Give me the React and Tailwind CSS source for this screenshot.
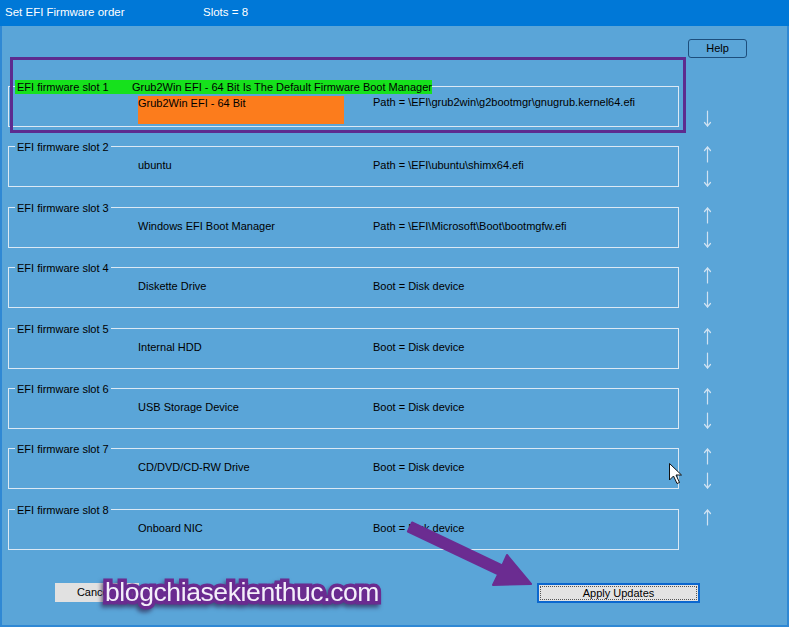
import React from 'react';

const slots = [
  { n: 1, name: 'Grub2Win EFI - 64 Bit', info: 'Path = \\EFI\\grub2win\\g2bootmgr\\gnugrub.kernel64.efi', up: false, down: true, current: true },
  { n: 2, name: 'ubuntu', info: 'Path = \\EFI\\ubuntu\\shimx64.efi', up: true, down: true },
  { n: 3, name: 'Windows EFI Boot Manager', info: 'Path = \\EFI\\Microsoft\\Boot\\bootmgfw.efi', up: true, down: true },
  { n: 4, name: 'Diskette Drive', info: 'Boot = Disk device', up: true, down: true },
  { n: 5, name: 'Internal HDD', info: 'Boot = Disk device', up: true, down: true },
  { n: 6, name: 'USB Storage Device', info: 'Boot = Disk device', up: true, down: true },
  { n: 7, name: 'CD/DVD/CD-RW Drive', info: 'Boot = Disk device', up: true, down: true },
  { n: 8, name: 'Onboard NIC', info: 'Boot = Disk device', up: true, down: false },
];

function Arrow({ dir }) {
  return (
    <svg width="9" height="17" viewBox="0 0 9 17" className="block">
      <g stroke="#cfe2f2" strokeWidth="1.2" fill="none" strokeLinecap="round">
        <line x1="4.5" y1="1" x2="4.5" y2="16" />
        {dir === 'up' ? (
          <polyline points="1.5,4.5 4.5,1 7.5,4.5" />
        ) : (
          <polyline points="1.5,12.5 4.5,16 7.5,12.5" />
        )}
      </g>
    </svg>
  );
}

function Slot({ slot }) {
  return (
    <div className="flex items-start">
      <div className="relative ml-[6px] w-[671px] h-[41px] border border-[#dbe9f5]">
        {slot.current ? (
          <>
            <div className="absolute left-[6px] top-[-7px] w-[417px] h-[14px] bg-[#16e11c] flex whitespace-nowrap leading-[14px]">
              <span className="pl-[2px] w-[118px]">EFI firmware slot 1</span>
              <span>Grub2Win EFI - 64 Bit Is The Default Firmware Boot Manager</span>
            </div>
            <div className="flex pl-[129px] pt-[9px] leading-[14px] whitespace-nowrap">
              <div className="w-[235px]">
                <div className="w-[206px] h-[28px] bg-[#fc7c1c]">{slot.name}</div>
              </div>
              <span className="-mt-[1px]">{slot.info}</span>
            </div>
          </>
        ) : (
          <>
            <span className="absolute left-[6px] top-[-6px] px-[2px] leading-[12px] bg-[#5aa5d8] whitespace-nowrap">
              EFI firmware slot {slot.n}
            </span>
            <div className="flex pl-[129px] pt-[11px] leading-[14px] whitespace-nowrap">
              <span className="w-[235px]">{slot.name}</span>
              <span>{slot.info}</span>
            </div>
          </>
        )}
      </div>
      <div className="ml-[24px] w-[9px] h-[41px] flex flex-col justify-between">
        {slot.up ? <Arrow dir="up" /> : <span />}
        {slot.down ? <Arrow dir="down" /> : <span />}
      </div>
    </div>
  );
}

export default function App() {
  return (
    <div className="relative w-[789px] h-[627px] overflow-hidden flex flex-col text-[11px] text-black font-['Liberation_Sans',Arial,sans-serif]">
      <div className="h-[26px] bg-[#0078d7] text-white text-[11.5px] flex items-center">
        <span className="pl-[5px] w-[203px]">Set EFI Firmware order</span>
        <span>Slots = 8</span>
      </div>

      <div className="flex-1 flex flex-col bg-[#5aa5d8] border-x-2 border-b-2 border-[#2f88d4]">
        <div className="flex justify-end pr-[40px] pt-[13px]">
          <button className="w-[59px] h-[19px] border border-[#1d4e7c] rounded-[3px] text-[11px] leading-[17px]">
            Help
          </button>
        </div>

        <div className="mt-[28px] flex flex-col gap-[19.4px]">
          {slots.map((s) => (
            <Slot key={s.n} slot={s} />
          ))}
        </div>

        <div className="flex items-start mt-[33px]">
          <button className="ml-[53px] w-[84px] h-[19px] bg-[#e1e1e1] text-[11px] leading-[19px] pr-[6px]">
            Cancel
          </button>
          <button className="ml-[398px] w-[163px] h-[20px] border-2 border-[#0b67cf] bg-[#e3e3e3] p-[1px]">
            <div className="h-full border border-dotted border-[#555] leading-[12px] text-[11px]">
              Apply Updates
            </div>
          </button>
        </div>
      </div>

      {/* annotation overlays */}
      <div className="absolute left-[10px] top-[57px] w-[676px] h-[76px] border-[3px] border-[#5d2b8f] pointer-events-none" />

      <svg className="absolute inset-0 pointer-events-none" width="789" height="627" viewBox="0 0 789 627">
        <polygon
          points="407.9,531.5 412.1,522.5 502.3,565.4 507,555 531,584 493,585 498.1,574.4"
          fill="#6b2c91"
          stroke="#6b2c91"
          strokeWidth="2"
          strokeLinejoin="round"
        />
        <path
          d="M669.5,463.5 L669.5,480 L673.5,476 L677,483.5 L679.5,482.5 L676,475 L681.5,475 Z"
          fill="#fff"
          stroke="#111"
          strokeWidth="1"
          strokeLinejoin="round"
        />
      </svg>

      <div className="absolute left-[105px] top-[575px] text-[26.5px] leading-[34px] tracking-[-0.4px] font-['Liberation_Sans',Arial,sans-serif] text-[#f4effa] [paint-order:stroke_fill] [-webkit-text-stroke:7px_#6a2b90] drop-shadow-[-2px_3px_2px_rgba(40,20,60,0.6)]">
        blogchiasekienthuc.com
      </div>
    </div>
  );
}
